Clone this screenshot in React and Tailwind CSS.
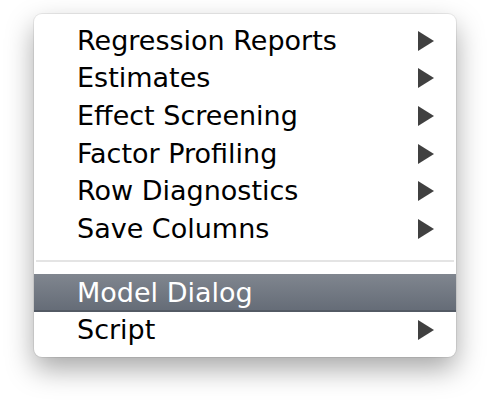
const items = [
  { label: 'Regression Reports', sub: true },
  { label: 'Estimates', sub: true },
  { label: 'Effect Screening', sub: true },
  { label: 'Factor Profiling', sub: true },
  { label: 'Row Diagnostics', sub: true },
  { label: 'Save Columns', sub: true },
]

function Arrow({ light }) {
  return (
    <svg width="16" height="20" viewBox="0 0 16 20" className="shrink-0">
      <path d="M0 0 L16 10 L0 20 Z" fill={light ? '#ffffff' : '#404040'} />
    </svg>
  )
}

function Row({ label, sub, active }) {
  return (
    <div
      className={`flex h-[37.6px] items-center pl-[43px] pr-[22px] ${
        active
          ? 'bg-gradient-to-b from-[#80868f] to-[#646b76] text-white shadow-[inset_0_-2px_0_#535a64]'
          : 'text-black'
      }`}
    >
      <span className="flex-1 whitespace-nowrap leading-[32px]">{label}</span>
      {sub && <Arrow light={active} />}
    </div>
  )
}

export default function App() {
  return (
    <div className="h-[412px] w-[490px] bg-white pl-[34px] pt-[14px]">
      <div
        className="h-[343px] w-[422px] rounded-[8px] bg-white py-[8px] text-[27px] shadow-[0_0_0_1px_rgba(0,0,0,0.07),0_12px_28px_rgba(0,0,0,0.35)]"
        style={{ fontFamily: '"DejaVu Sans", "Lucida Grande", sans-serif' }}
      >
        {items.map((it) => (
          <Row key={it.label} {...it} />
        ))}
        <div className="flex h-[26.4px] items-center px-[2px]">
          <div className="h-[2px] w-full bg-[#e4e4e4]" />
        </div>
        <Row label="Model Dialog" active />
        <Row label="Script" sub />
      </div>
    </div>
  )
}
